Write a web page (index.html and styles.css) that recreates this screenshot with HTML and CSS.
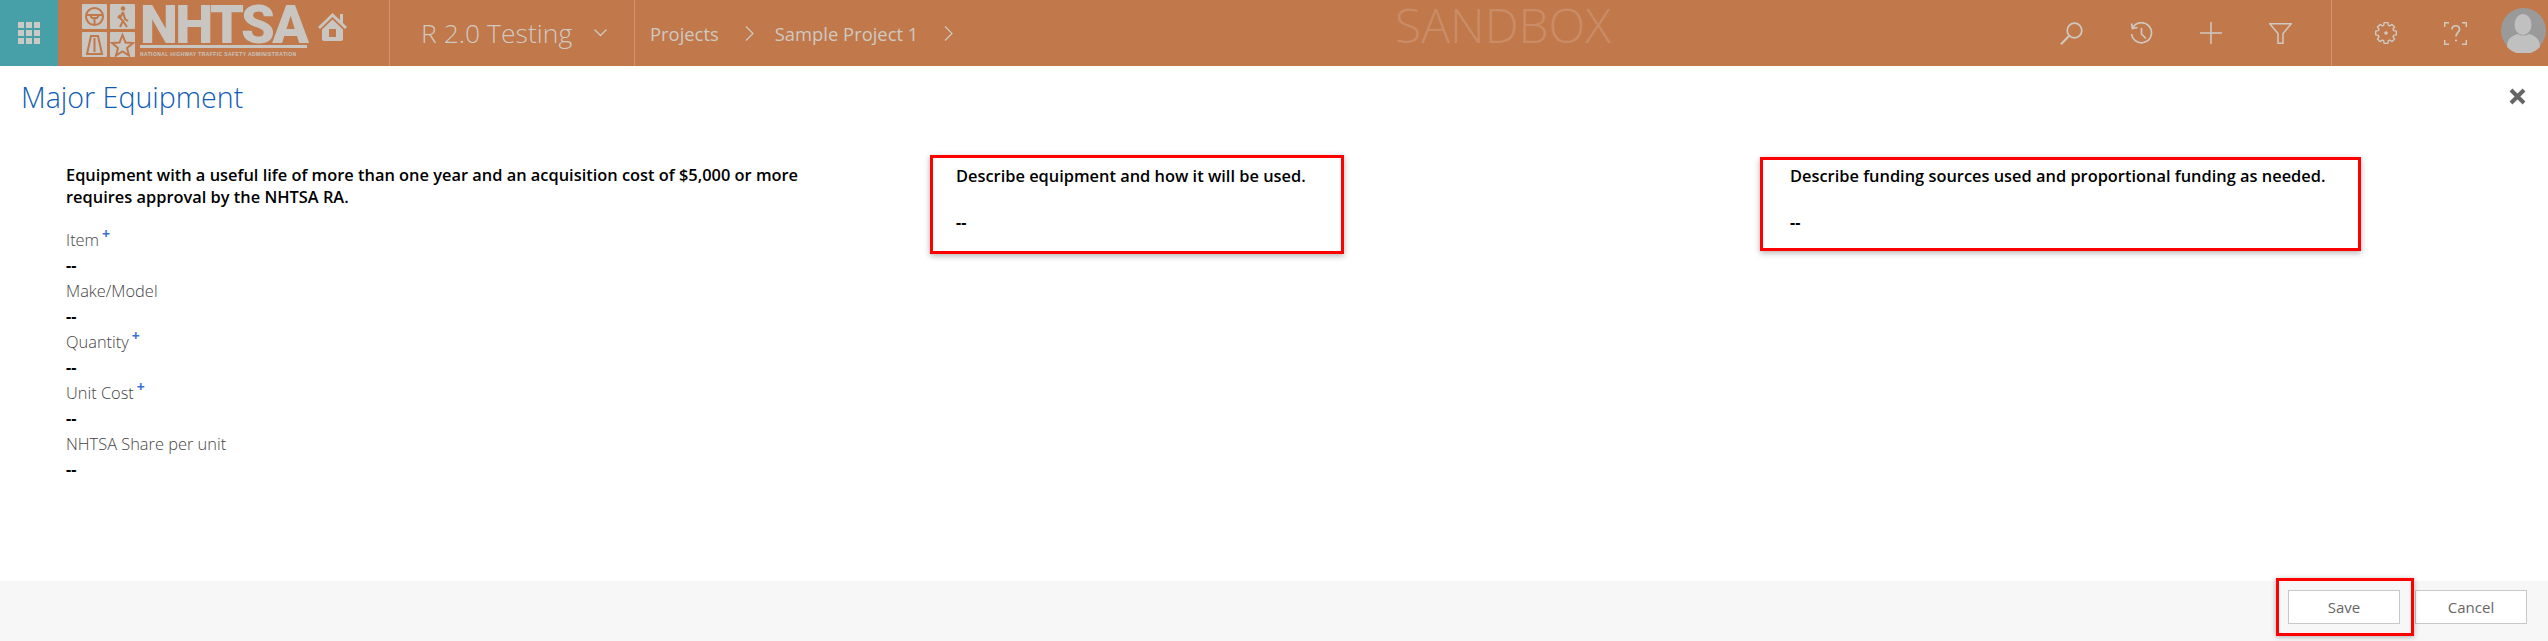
FILE: index.html
```html
<!DOCTYPE html>
<html lang="en">
<head>
    <meta charset="UTF-8">
    <meta name="viewport" content="width=device-width, initial-scale=1.0">
    <title>Major Equipment</title>
    <link rel="stylesheet" href="styles.css">
</head>
<body>
    <div class="page">
        <header class="topbar">
            <div class="apps">
                <svg width="22" height="22" viewBox="0 0 22 22" fill="#c9c9c5">
                    <rect x="0" y="0" width="6" height="6"/><rect x="8" y="0" width="6" height="6"/><rect x="16" y="0" width="6" height="6"/>
                    <rect x="0" y="8" width="6" height="6"/><rect x="8" y="8" width="6" height="6"/><rect x="16" y="8" width="6" height="6"/>
                    <rect x="0" y="16" width="6" height="6"/><rect x="8" y="16" width="6" height="6"/><rect x="16" y="16" width="6" height="6"/>
                </svg>
            </div>
            <div class="brand">
                <svg class="brand-tiles" width="53" height="53" viewBox="0 0 53 53">
                    <rect x="0" y="0" width="25" height="25" rx="1" fill="#c9c5c0"/>
                    <rect x="28" y="0" width="25" height="25" rx="1" fill="#c9c5c0"/>
                    <rect x="0" y="28" width="25" height="25" rx="1" fill="#c9c5c0"/>
                    <rect x="28" y="28" width="25" height="25" rx="1" fill="#c9c5c0"/>
                    <circle cx="12.5" cy="12.5" r="8.5" fill="none" stroke="#c1784a" stroke-width="2"/>
                    <path d="M5 11h15M12.5 13v7M8 11l2 3h5l2-3" fill="none" stroke="#c1784a" stroke-width="2"/>
                    <circle cx="41" cy="4.5" r="2.2" fill="#c1784a"/>
                    <path d="M41 8l-3 6 3 3-3 6M41 8l2 7 3 2M41 17l4 6M38 11l-2 3" fill="none" stroke="#c1784a" stroke-width="2"/>
                    <path d="M9 32h7l4 18H5zM12.5 34v14" fill="none" stroke="#c1784a" stroke-width="2"/>
                    <path d="M40.5 31l3 7.5 7.500.5-6 5 2 7.500-6.500-4-6.500 4 2-7.500-6-5 7.500-.5z" fill="none" stroke="#c1784a" stroke-width="2"/>
                </svg>
                <div class="brand-name">
                    <div class="brand-title">NHTSA</div>
                    <div class="brand-sub">NATIONAL HIGHWAY TRAFFIC SAFETY ADMINISTRATION</div>
                </div>
                <svg class="brand-home" width="29" height="28" viewBox="0 0 29 28" fill="#c9c5c0">
                    <path d="M14.500 0L0 14l2 2L14.500 4 27 16l2-2-4-4V1h-3v6z"/>
                    <path d="M4 16.500L14.500 6.500 25 16.500V26a2 2 0 0 1-2 2H6a2 2 0 0 1-2-2zM11 16v8h7v-8z" fill-rule="evenodd"/>
                </svg>
            </div>
            <div class="project">
                <span class="project-name">R 2.0 Testing</span>
                <svg width="13" height="8" viewBox="0 0 13 8" fill="none" stroke="#cfc9c3" stroke-width="1.300"><path d="M.5.500l6 6 6-6"/></svg>
            </div>
            <nav class="crumbs">
                <span class="crumb">Projects</span>
                <svg width="9" height="15" viewBox="0 0 9 15" fill="none" stroke="#cfc9c3" stroke-width="1.200"><path d="M1 .500l7 7-7 7"/></svg>
                <span class="crumb">Sample Project 1</span>
                <svg width="9" height="15" viewBox="0 0 9 15" fill="none" stroke="#cfc9c3" stroke-width="1.200"><path d="M1 .500l7 7-7 7"/></svg>
            </nav>
            <div class="sandbox">SANDBOX</div>
            <div class="tools">
                <svg width="23" height="23" viewBox="0 0 23 23" fill="none" stroke="#cfc9c3" stroke-width="1.700"><circle cx="14.500" cy="8.500" r="7.300"/><path d="M9 14L1 22.300" stroke-width="2"/></svg>
                <svg width="23" height="23" viewBox="0 0 23 23" fill="none" stroke="#cfc9c3" stroke-width="1.700"><path d="M3 5.500A10 10 0 1 1 1.600 12"/><path d="M1.500 1.500l1 5 5-1M11.500 6v6l4.500 4.500"/></svg>
                <svg width="22" height="22" viewBox="0 0 22 22" fill="none" stroke="#cfc9c3" stroke-width="1.500"><path d="M11 0v22M0 11h22"/></svg>
                <svg width="23" height="21" viewBox="0 0 23 21" fill="none" stroke="#cfc9c3" stroke-width="1.500"><path d="M.800.800h21.400L14 10.500v9.700H9v-9.700z"/></svg>
            </div>
            <div class="account">
                <svg class="account-gear" width="22" height="22" viewBox="-11 -11 22 22" fill="none" stroke="#cfc9c3" stroke-width="1.400" stroke-linejoin="round"><path d="M-2.340-7.650L-1.820-10.340H1.820L2.340-7.650 3.760-7.060 6.020-8.600 8.600-6.020 7.060-3.760 7.650-2.340 10.340-1.820V1.820L7.650 2.340 7.060 3.760 8.600 6.020 6.020 8.600 3.760 7.060 2.340 7.650 1.820 10.340H-1.820L-2.340 7.650-3.760 7.060-6.020 8.600-8.600 6.020-7.060 3.760-7.650 2.340-10.340 1.820V-1.820L-7.650-2.340-7.060-3.760-8.600-6.020-6.020-8.600-3.760-7.060z"/><circle r="1.800" fill="#cfc9c3" stroke="none"/></svg>
                <svg class="account-help" width="23" height="23" viewBox="0 0 23 23" fill="none" stroke="#cfc9c3" stroke-width="1.400"><path d="M5 .700H.700V5M18 .700h4.300V5M5 22.300H.700V18M18 22.300h4.300V18"/><path d="M8 7.500c0-5 7.500-5 7.500 0 0 3-3.500 3-3.500 7" stroke-width="1.700"/><circle cx="12" cy="18.500" r="1.100" fill="#cfc9c3" stroke="none"/></svg>
                <svg class="account-avatar" width="45" height="45" viewBox="0 0 45 45">
                    <circle cx="22.500" cy="22.500" r="22.500" fill="#9a9a9a"/>
                    <ellipse cx="22" cy="16.500" rx="8.500" ry="10.500" fill="#c0c0c0"/>
                    <path d="M6 39c0-8 4-11 11-13 3 2 8 2 11 0 7 2 11 5 11 13a22.500 22.500 0 0 1-33 0z" fill="#c0c0c0"/>
                </svg>
            </div>
        </header>

        <main class="content">
            <div class="title-row">
                <h1 class="page-title">Major Equipment</h1>
                <svg class="close-icon" width="17" height="17" viewBox="0 0 17 17" fill="none" stroke="#666" stroke-width="4"><path d="M2 2l13 13M15 2L2 15"/></svg>
            </div>
            <div class="columns">
                <section class="details">
                    <p class="note">Equipment with a useful life of more than one year and an acquisition cost of $5,000 or more requires approval by the NHTSA RA.</p>
                    <div class="field">
                        <div class="field-label">Item<span class="required">+</span></div>
                        <div class="field-value">--</div>
                    </div>
                    <div class="field">
                        <div class="field-label">Make/Model</div>
                        <div class="field-value">--</div>
                    </div>
                    <div class="field">
                        <div class="field-label">Quantity<span class="required">+</span></div>
                        <div class="field-value">--</div>
                    </div>
                    <div class="field">
                        <div class="field-label">Unit Cost<span class="required">+</span></div>
                        <div class="field-value">--</div>
                    </div>
                    <div class="field">
                        <div class="field-label">NHTSA Share per unit</div>
                        <div class="field-value">--</div>
                    </div>
                </section>
                <section class="callout callout-use">
                    <div class="callout-title">Describe equipment and how it will be used.</div>
                    <div class="callout-value">--</div>
                </section>
                <section class="callout callout-funding">
                    <div class="callout-title">Describe funding sources used and proportional funding as needed.</div>
                    <div class="callout-value">--</div>
                </section>
            </div>
        </main>

        <footer class="actions">
            <div class="save-wrap">
                <button class="action-btn">Save</button>
            </div>
            <button class="action-btn">Cancel</button>
        </footer>
    </div>
</body>
</html>
```

FILE: styles.css
```css
body {
    font-family: "Open Sans", "Noto Sans", sans-serif;
    margin: 0;
    background-color: #fff;
    color: #000;
}

.page {
    display: flex;
    flex-direction: column;
    height: 641px;
}

/* top bar */
.topbar {
    display: flex;
    align-items: stretch;
    height: 66px;
    background: #c1784a;
    color: #cfc9c3;
    flex-shrink: 0;
}

.apps {
    display: flex;
    align-items: center;
    justify-content: center;
    width: 58px;
    background: #47a0a8;
    flex-shrink: 0;
}

.brand {
    display: flex;
    align-items: flex-start;
    box-sizing: border-box;
    width: 332px;
    padding: 4px 0 0 24px;
    border-right: 1px solid #d0976f;
}

.brand-name {
    width: 167px;
    margin-left: 5px;
}

.brand-title {
    font-family: Roboto, "Liberation Sans", sans-serif;
    font-weight: 900;
    font-size: 54px;
    line-height: 41px;
    height: 41px;
    letter-spacing: -2.6px;
    color: #c9c5c0;
    border-bottom: 3px solid #c9c5c0;
}

.brand-sub {
    font-family: "Liberation Sans", Arial, sans-serif;
    font-weight: bold;
    font-size: 5px;
    line-height: 8px;
    letter-spacing: .4px;
    margin-top: 2px;
    white-space: nowrap;
    color: #c9c5c0;
}

.brand-home {
    margin: 9px 0 0 11px;
}

.project {
    display: flex;
    align-items: center;
    box-sizing: border-box;
    width: 245px;
    padding-left: 31px;
    gap: 22px;
    border-right: 1px solid #d0976f;
}

.project-name {
    font-size: 26.5px;
    font-weight: 300;
    white-space: nowrap;
}

.crumbs {
    display: flex;
    align-items: center;
    gap: 21px;
    box-sizing: border-box;
    width: 760px;
    padding-left: 15px;
    font-size: 18.4px;
    white-space: nowrap;
}

.crumb {
    margin-right: 5px;
}

.sandbox {
    width: 219px;
    font-size: 48px;
    font-weight: 300;
    line-height: 50px;
    height: 50px;
    color: #c98c66;
    white-space: nowrap;
}

.tools {
    display: flex;
    align-items: center;
    gap: 47px;
    box-sizing: border-box;
    margin-left: auto;
    padding-right: 39px;
    border-right: 1px solid #d0976f;
}

.account {
    display: flex;
    align-items: center;
    width: 216px;
    box-sizing: border-box;
    padding-left: 43px;
}

.account-help {
    margin-left: 47px;
}

.account-avatar {
    margin: -5px 0 0 34px;
}

/* main part */
.content {
    flex: 1;
}

.title-row {
    display: flex;
    align-items: center;
    justify-content: space-between;
    height: 60px;
    padding: 0 22px 0 21px;
}

.page-title {
    margin: 0;
    font-size: 28.6px;
    font-weight: 300;
    color: #0f5cb5;
}

.columns {
    display: grid;
    grid-template-columns: 864px 830px 601px;
    padding: 29px 0 0 66px;
}

.details {
    padding-top: 9px;
}

.note {
    margin: 0 0 19px;
    width: 745px;
    font-size: 16.4px;
    font-weight: 600;
    line-height: 22px;
}

.field-label {
    font-size: 16.4px;
    font-weight: 300;
    line-height: 25px;
    color: #444;
}

.field-value {
    font-size: 16px;
    font-weight: 700;
    line-height: 26px;
}

.required {
    position: relative;
    top: -7px;
    margin-left: 3px;
    font-size: 14px;
    font-weight: 700;
    line-height: 1;
    color: #3b6fd4;
}

.callout {
    box-sizing: border-box;
    border: 3px solid #f00;
    box-shadow: 0 2px 6px rgba(0, 0, 0, 0.3);
    align-self: start;
}

.callout-use {
    width: 414px;
    padding: 7px 0 18px 23px;
}

.callout-funding {
    width: 601px;
    margin-top: 2px;
    padding: 5px 0 15px 27px;
}

.callout-title {
    font-size: 16.4px;
    font-weight: 600;
    line-height: 22px;
    white-space: nowrap;
}

.callout-value {
    margin-top: 24px;
    font-size: 16px;
    font-weight: 700;
    line-height: 22px;
}

/* footer */
.actions {
    display: flex;
    align-items: center;
    justify-content: flex-end;
    gap: 15px;
    height: 60px;
    padding: 0 21px 8px 0;
    box-sizing: border-box;
    background: #f7f7f7;
    flex-shrink: 0;
}

.save-wrap {
    position: relative;
    display: flex;
}

.save-wrap::after {
    content: "";
    position: absolute;
    top: -12px;
    left: -12px;
    right: -14px;
    bottom: -12px;
    border: 3px solid #f00;
    box-shadow: 0 1px 5px rgba(0, 0, 0, 0.3);
    pointer-events: none;
}

.action-btn {
    width: 112px;
    height: 34px;
    padding: 0;
    font-family: inherit;
    font-size: 15px;
    color: #666;
    background: #fff;
    border: 1px solid #c8c8c8;
    cursor: pointer;
}
```
